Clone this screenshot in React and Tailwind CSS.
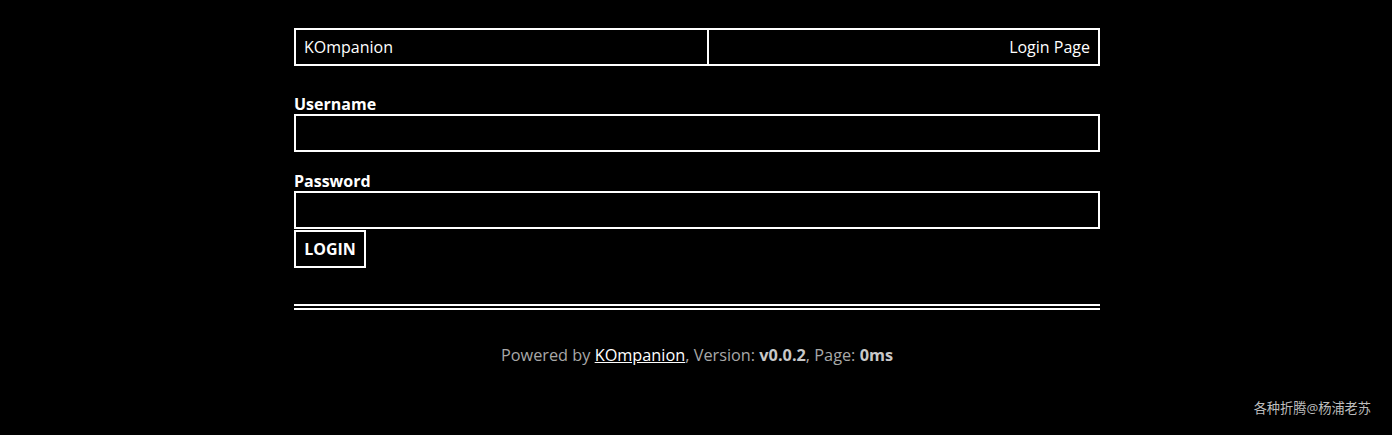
export default function App() {
  const font = { fontFamily: '"Open Sans", "Noto Sans CJK SC", sans-serif' };
  return (
    <div className="min-h-[435px] bg-black text-white relative pl-[2px]" style={font}>
      <div className="w-[806px] mx-auto pt-[28px]">
        <div className="flex border-2 border-white h-[38px] text-[16px]">
          <div className="w-[413px] border-r-2 border-white flex items-center pl-[8px]">KOmpanion</div>
          <div className="flex-1 flex items-center justify-end pr-[8px]">Login Page</div>
        </div>
        <form className="mt-[28px]" onSubmit={(e) => e.preventDefault()}>
          <label className="block font-bold text-[16px] leading-[20px]">Username</label>
          <input type="text" className="block w-full h-[38px] border-2 border-white bg-black text-white outline-none px-2" />
          <label className="block font-bold text-[16px] leading-[20px] mt-[19px]">Password</label>
          <input type="password" className="block w-full h-[38px] border-2 border-white bg-black text-white outline-none px-2" />
          <button type="submit" className="block mt-[1px] w-[72px] h-[38px] border-2 border-white bg-black text-white font-bold text-[16px]">LOGIN</button>
        </form>
        <div className="mt-[36px] border-b-[6px] border-double border-white"></div>
        <div className="mt-[33px] text-center text-[16.3px] text-[#a8a8a8]">
          Powered by <a href="#" className="text-white underline">KOmpanion</a>, Version: <b className="text-[#c8c8c8]">v0.0.2</b>, Page: <b className="text-[#c8c8c8]">0ms</b>
        </div>
      </div>
      <div className="absolute right-[21px] top-[399px] text-[13.2px] text-[#bdbdbd]">各种折腾@杨浦老苏</div>
    </div>
  );
}
